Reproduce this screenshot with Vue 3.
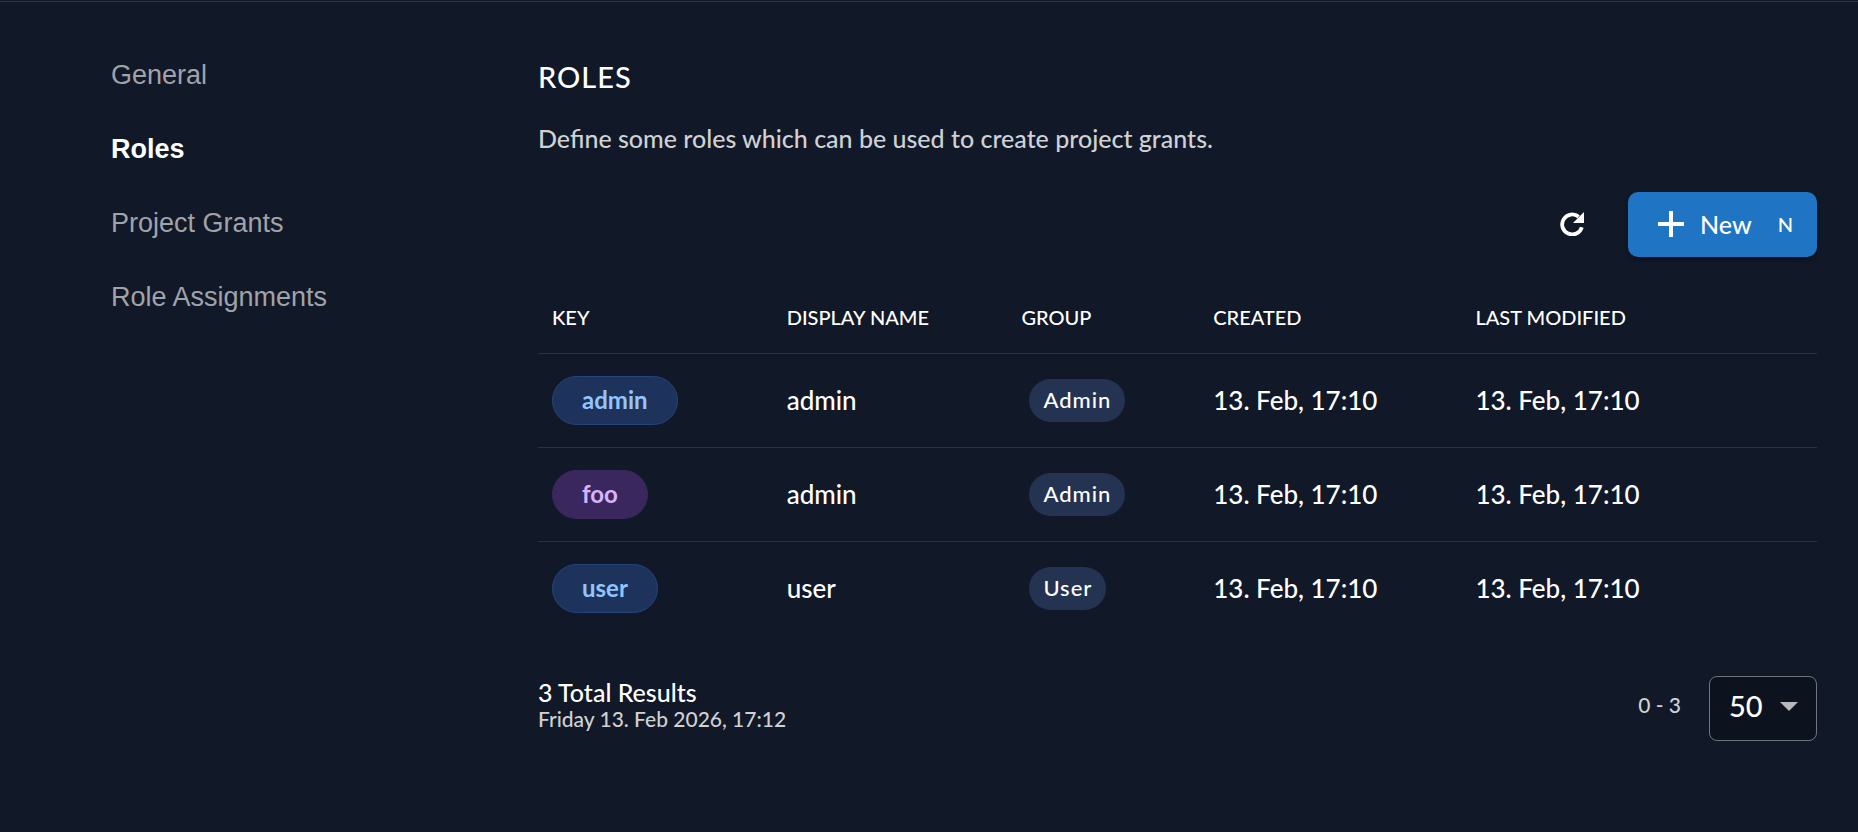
<template>
  <div class="page">
    <nav class="side-nav">
      <a
        v-for="item in navItems"
        :key="item"
        href="#"
        class="nav-link"
        :class="{ active: item === activeItem }"
        @click.prevent="activeItem = item"
      >{{ item }}</a>
    </nav>

    <main class="content">
      <h2 class="title">ROLES</h2>
      <p class="description">Define some roles which can be used to create project grants.</p>

      <div class="actions">
        <button type="button" class="refresh-button" aria-label="Refresh">
          <svg viewBox="0 0 24 24" width="24" height="24">
            <path fill="none" stroke="currentColor" stroke-width="3.8" d="M21.8 15.2A10 10 0 1 1 18.6 4.8" />
            <path fill="currentColor" d="M24 0v11H13z" />
          </svg>
        </button>
        <button type="button" class="new-button">
          <svg viewBox="0 0 26 26" width="26" height="26">
            <path fill="currentColor" d="M11 0h4v11h11v4H15v11h-4V15H0v-4h11z" />
          </svg>
          <span>New</span>
          <span class="shortcut">N</span>
        </button>
      </div>

      <table class="roles-table">
        <thead>
          <tr>
            <th class="col-key">KEY</th>
            <th class="col-name">DISPLAY NAME</th>
            <th class="col-group">GROUP</th>
            <th class="col-created">CREATED</th>
            <th>LAST MODIFIED</th>
          </tr>
        </thead>
        <tbody>
          <tr v-for="role in roles" :key="role.key">
            <td><span class="key-chip" :class="role.color">{{ role.key }}</span></td>
            <td>{{ role.name }}</td>
            <td><span class="group-chip">{{ role.group }}</span></td>
            <td>{{ role.created }}</td>
            <td>{{ role.modified }}</td>
          </tr>
        </tbody>
      </table>

      <div class="paginator">
        <div class="summary">
          <div class="total">{{ roles.length }} Total Results</div>
          <div class="timestamp">Friday 13. Feb 2026, 17:12</div>
        </div>
        <span class="range">0 - {{ roles.length }}</span>
        <div class="page-size">
          <select v-model="pageSize" aria-label="Items per page">
            <option>25</option>
            <option>50</option>
            <option>100</option>
          </select>
          <svg class="arrow" viewBox="0 0 18 9" width="18" height="9">
            <path fill="currentColor" d="M0 0h18L9 9z" />
          </svg>
        </div>
      </div>
    </main>
  </div>
</template>

<script setup>
import { ref } from 'vue';

const navItems = ['General', 'Roles', 'Project Grants', 'Role Assignments'];
const activeItem = ref('Roles');
const pageSize = ref('50');

const roles = [
  { key: 'admin', name: 'admin', group: 'Admin', color: 'blue', created: '13. Feb, 17:10', modified: '13. Feb, 17:10' },
  { key: 'foo', name: 'admin', group: 'Admin', color: 'purple', created: '13. Feb, 17:10', modified: '13. Feb, 17:10' },
  { key: 'user', name: 'user', group: 'User', color: 'blue', created: '13. Feb, 17:10', modified: '13. Feb, 17:10' },
];
</script>

<style>
html,
body {
  margin: 0;
  background-color: #111827;
}
</style>

<style scoped>
.page {
  display: flex;
  box-sizing: border-box;
  min-height: 100vh;
  margin-top: 1px;
  margin-bottom: -1px;
  padding: 0 41px 0 111px;
  border-top: 1px solid #303643;
  color: #fff;
  font-family: Lato, "Liberation Sans", sans-serif;
  font-size: 25px;
  font-weight: 500;
  line-height: 32px;
}

.side-nav {
  display: flex;
  flex-direction: column;
  flex: none;
  gap: 42px;
  width: 427px;
  padding-top: 57px;
}

.nav-link {
  color: #a0a3a9;
  font-family: "Liberation Sans", Arial, sans-serif;
  font-size: 27px;
  font-weight: 400;
  text-decoration: none;
}

.nav-link.active {
  color: #fff;
  font-weight: 700;
}

.content {
  flex: 1;
  min-width: 0;
  padding-top: 59px;
}

.title {
  margin: 0;
  font-size: 29px;
  font-weight: 500;
  letter-spacing: 1px;
}

.description {
  margin: 29px 0 0;
  color: #cfd1d4;
}

.actions {
  display: flex;
  align-items: center;
  justify-content: flex-end;
  gap: 44px;
  margin-top: 38px;
}

button {
  border: 0;
  color: #fff;
  font-family: inherit;
  font-weight: inherit;
  cursor: pointer;
}

.refresh-button {
  display: flex;
  padding: 0 0 2px;
  background: none;
}

.new-button {
  display: flex;
  align-items: center;
  height: 65px;
  padding: 0 24px 2px 30px;
  border-radius: 10px;
  background-color: #2074c4;
  box-shadow: 0 3px 5px rgba(0, 0, 0, 0.3);
  font-size: 25px;
  gap: 16px;
}

.shortcut {
  margin-left: 10px;
  font-size: 20px;
}

.roles-table {
  width: 100%;
  margin-top: 25px;
  border-collapse: collapse;
  table-layout: fixed;
}

th,
td {
  box-sizing: border-box;
  padding: 0 14px;
  border-bottom: 1px solid #2b313f;
  text-align: left;
}

th {
  height: 71px;
  font-size: 20px;
  font-weight: 500;
}

td {
  height: 94px;
  font-size: 26px;
}

tbody tr:last-child td {
  border-bottom: 0;
}

.col-key,
.col-name {
  width: 18.35%;
}

.col-group {
  width: 15%;
}

.col-created {
  width: 20.5%;
}

.key-chip,
.group-chip {
  display: inline-block;
  vertical-align: middle;
  box-sizing: border-box;
}

.key-chip {
  height: 49px;
  padding: 0 29px;
  border: 1px solid;
  border-radius: 25px;
  font-size: 24px;
  font-weight: 700;
  line-height: 46px;
}

.key-chip.blue {
  border-color: #24447b;
  background-color: #1d335b;
  color: #93c5fd;
}

.key-chip.purple {
  border-color: #3a275e;
  background-color: #3a275e;
  color: #d8b4fe;
}

.group-chip {
  height: 43px;
  margin-left: 8px;
  padding: 0 14px;
  border-radius: 22px;
  background-color: #243352;
  font-size: 22px;
  letter-spacing: 1px;
  line-height: 42px;
}

.paginator {
  display: flex;
  align-items: center;
  margin-top: 41px;
}

.summary {
  flex: 1;
  align-self: flex-start;
}

.timestamp {
  color: #cfd1d4;
  font-size: 21px;
  line-height: 22px;
}

.range {
  padding-bottom: 8px;
  margin-right: 28px;
  color: #cfd1d4;
  font-size: 21px;
}

.page-size {
  position: relative;
}

select {
  display: block;
  box-sizing: border-box;
  width: 108px;
  height: 65px;
  padding: 0 44px 6px 19px;
  border: 1px solid #70747d;
  border-radius: 8px;
  background-color: #0d131e;
  color: #fff;
  font-family: inherit;
  font-size: 29px;
  font-weight: inherit;
  appearance: none;
}

.arrow {
  position: absolute;
  top: 26px;
  right: 19px;
  color: #b7b8bc;
  pointer-events: none;
}
</style>
